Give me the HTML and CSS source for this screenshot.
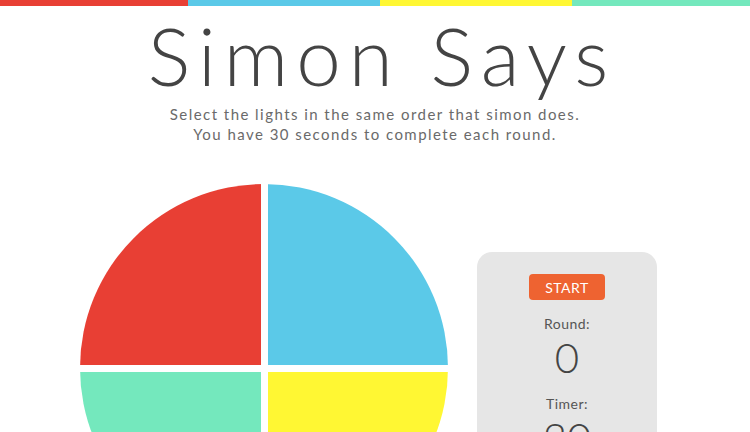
FILE: index.html
```html
<!DOCTYPE html>
<html lang="en">
<head>
<meta charset="utf-8">
<title>Simon Says</title>
<link rel="stylesheet" href="styles.css">
</head>
<body>
<div class="topbar">
  <span class="bar red"></span>
  <span class="bar blue"></span>
  <span class="bar yellow"></span>
  <span class="bar green"></span>
</div>
<header class="header">
  <h1 class="title">Simon Says</h1>
  <p class="subtitle">Select the lights in the same order that simon does.<br>You have 30 seconds to complete each round.</p>
</header>
<main class="game">
  <div class="board">
    <div class="pad pad-red"></div>
    <div class="pad pad-blue"></div>
    <div class="pad pad-green"></div>
    <div class="pad pad-yellow"></div>
  </div>
  <aside class="panel">
    <button class="start">START</button>
    <div class="stat-label">Round:</div>
    <div class="stat-value">0</div>
    <div class="stat-label">Timer:</div>
    <div class="stat-value">30</div>
  </aside>
</main>
</body>
</html>
```
FILE: styles.css
```css
html, body {
  margin: 0;
  padding: 0;
  background: #ffffff;
}
body {
  font-family: Lato, "Open Sans", sans-serif;
  color: #444444;
  overflow: hidden;
}
.topbar {
  display: grid;
  grid-template-columns: 188px 192px 192px 1fr;
  height: 6px;
}
.red { background: #e83f34; }
.blue { background: #5bc9e8; }
.yellow { background: #fff733; }
.green { background: #74e8bd; }
.header {
  text-align: center;
}
.title {
  margin: 2px 0 0;
  padding-left: 14px;
  font-size: 80px;
  font-weight: 300;
  line-height: 94px;
  letter-spacing: 8px;
  color: #444444;
}
.subtitle {
  margin: 2px 0 0;
  font-size: 15px;
  font-weight: 400;
  line-height: 20px;
  letter-spacing: 1.45px;
  color: #6a6a6a;
}
.game {
  display: flex;
  align-items: center;
  gap: 29px;
  padding: 40px 0 0 80px;
}
.board {
  width: 368px;
  height: 368px;
  flex: none;
  border-radius: 50%;
  overflow: hidden;
  display: grid;
  grid-template-columns: 1fr 1fr;
  grid-template-rows: 1fr 1fr;
  gap: 7px;
}
.pad-red { background: #e83f34; }
.pad-blue { background: #5bc9e8; }
.pad-green { background: #74e8bd; }
.pad-yellow { background: #fff733; }
.panel {
  width: 180px;
  height: 232px;
  box-sizing: border-box;
  flex: none;
  background: #e6e6e6;
  border-radius: 15px;
  padding-top: 22px;
  display: flex;
  flex-direction: column;
  align-items: center;
}
.start {
  width: 76px;
  height: 26px;
  border: none;
  border-radius: 4px;
  background: #ee6331;
  color: #ffffff;
  font-family: Lato, sans-serif;
  font-size: 14px;
  font-weight: 400;
  letter-spacing: 0.5px;
  padding: 0;
  margin-bottom: 14px;
}
.stat-label {
  font-size: 14px;
  line-height: 20px;
  color: #555555;
  letter-spacing: 0.5px;
}
.stat-value {
  font-size: 42px;
  font-weight: 300;
  line-height: 46px;
  color: #444444;
  margin-bottom: 14px;
}
```
